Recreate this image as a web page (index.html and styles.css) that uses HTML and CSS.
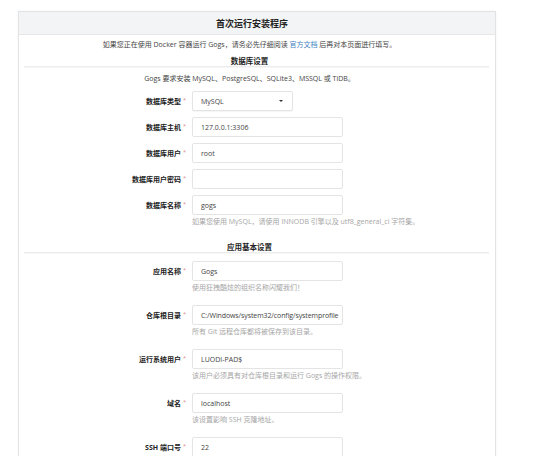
FILE: index.html
```html
<!DOCTYPE html>
<html lang="zh-CN">
<head>
<meta charset="utf-8">
<title>首次运行安装程序</title>
<link rel="stylesheet" href="styles.css">
</head>
<body>
<div class="card">
  <div class="card-head">首次运行安装程序</div>
  <div class="card-body">
    <p class="intro">如果您正在使用 Docker 容器运行 Gogs，请务必先仔细阅读 <a href="#">官方文档</a> 后再对本页面进行填写。</p>

    <h3 class="section">数据库设置</h3>
    <p class="desc">Gogs 要求安装 MySQL、PostgreSQL、SQLite3、MSSQL 或 TiDB。</p>

    <div class="rows db">
      <div class="row">
        <label class="lbl">数据库类型<span class="req">*</span></label>
        <div class="select"><span>MySQL</span><span class="arrow"></span></div>
      </div>
      <div class="row">
        <label class="lbl">数据库主机<span class="req">*</span></label>
        <div class="input">127.0.0.1:3306</div>
      </div>
      <div class="row">
        <label class="lbl">数据库用户<span class="req">*</span></label>
        <div class="input">root</div>
      </div>
      <div class="row">
        <label class="lbl">数据库用户密码<span class="req">*</span></label>
        <div class="input"></div>
      </div>
      <div class="row">
        <label class="lbl">数据库名称<span class="req">*</span></label>
        <div class="field">
          <div class="input">gogs</div>
          <p class="help">如果您使用 MySQL，请使用 INNODB 引擎以及 utf8_general_ci 字符集。</p>
        </div>
      </div>
    </div>

    <h3 class="section second">应用基本设置</h3>

    <div class="rows app">
      <div class="row">
        <label class="lbl">应用名称<span class="req">*</span></label>
        <div class="field">
          <div class="input">Gogs</div>
          <p class="help">使用狂拽酷炫的组织名称闪耀我们！</p>
        </div>
      </div>
      <div class="row">
        <label class="lbl">仓库根目录<span class="req">*</span></label>
        <div class="field">
          <div class="input tight">C:/Windows/system32/config/systemprofile</div>
          <p class="help">所有 Git 远程仓库都将被保存到该目录。</p>
        </div>
      </div>
      <div class="row">
        <label class="lbl">运行系统用户<span class="req">*</span></label>
        <div class="field">
          <div class="input">LUODI-PAD$</div>
          <p class="help">该用户必须具有对仓库根目录和运行 Gogs 的操作权限。</p>
        </div>
      </div>
      <div class="row">
        <label class="lbl">域名<span class="req">*</span></label>
        <div class="field">
          <div class="input">localhost</div>
          <p class="help">该设置影响 SSH 克隆地址。</p>
        </div>
      </div>
      <div class="row">
        <label class="lbl">SSH 端口号<span class="req">*</span></label>
        <div class="field">
          <div class="input">22</div>
        </div>
      </div>
    </div>
  </div>
</div>
</body>
</html>
```

FILE: styles.css
```css
html, body {
  margin: 0;
  padding: 0;
  background: #ffffff;
}

body {
  font-family: "Open Sans", "Noto Sans CJK SC", sans-serif;
  color: #333;
  overflow: hidden;
}

.card {
  margin: 11px 0 0 18px;
  width: 478px;
  min-height: 460px;
  box-sizing: border-box;
  border: 1px solid #e3e3e4;
  border-bottom: none;
  box-shadow: 0 0 2px rgba(0, 0, 0, 0.06);
}

.card-head {
  height: 22px;
  background: #f3f4f5;
  border-bottom: 1px solid #e6e6e6;
  display: flex;
  align-items: center;
  justify-content: center;
  padding-right: 10px;
  font-size: 9px;
  font-weight: bold;
  color: #222;
}

.card-body {
  padding: 0 6px 0 5px;
}

.intro {
  margin: 4px 0 0;
  padding-right: 14px;
  text-align: center;
  font-size: 7px;
  line-height: 12px;
  color: #444;
}

.intro a {
  color: #4183c4;
  text-decoration: none;
}

.section {
  margin: 4px 0 0;
  padding: 0 14px 0 0;
  height: 11px;
  line-height: 12px;
  text-align: center;
  font-size: 7.5px;
  font-weight: bold;
  color: #222;
  border-bottom: 1px solid #ececec;
  box-shadow: 0 1px 0 #f6f6f6;
}

.section.second {
  margin-top: 14px;
  height: 10px;
  line-height: 10px;
}

.desc {
  margin: 6px 0 0;
  padding-right: 14px;
  text-align: center;
  font-size: 7px;
  line-height: 12px;
  color: #444;
}

.rows {
  display: flex;
  flex-direction: column;
}

.rows.db {
  margin-top: 6px;
  gap: 6px;
}

.rows.app {
  margin-top: 8px;
  gap: 11px;
}

.row {
  display: grid;
  grid-template-columns: 162px auto;
  column-gap: 6px;
  align-items: start;
}

.lbl {
  height: 20px;
  display: flex;
  align-items: center;
  justify-content: flex-end;
  font-size: 7px;
  font-weight: bold;
  color: #222;
  white-space: nowrap;
}

.req {
  color: #e08a8a;
  font-size: 5.5px;
  font-weight: normal;
  margin-left: 2px;
  align-self: flex-start;
  margin-top: 5px;
}

.field {
  display: flex;
  flex-direction: column;
}

.input,
.select {
  box-sizing: border-box;
  height: 20px;
  width: 151px;
  border: 1px solid #e4e4e4;
  border-radius: 2px;
  padding: 0 8px;
  display: flex;
  align-items: center;
  font-size: 7px;
  color: #444;
  white-space: nowrap;
  overflow: hidden;
  background: #fff;
}

.input.tight {
  padding: 0 3px 0 8px;
  letter-spacing: -0.1px;
}

.select {
  width: 101px;
  justify-content: space-between;
  box-shadow: 0 1px 1px rgba(0, 0, 0, 0.04);
}

.arrow {
  width: 0;
  height: 0;
  border-left: 2px solid transparent;
  border-right: 2px solid transparent;
  border-top: 2.5px solid #333;
  margin-right: 1px;
}

.help {
  margin: 1px 0 0;
  font-size: 7px;
  line-height: 12px;
  color: #a6a6a6;
  white-space: nowrap;
}
```
